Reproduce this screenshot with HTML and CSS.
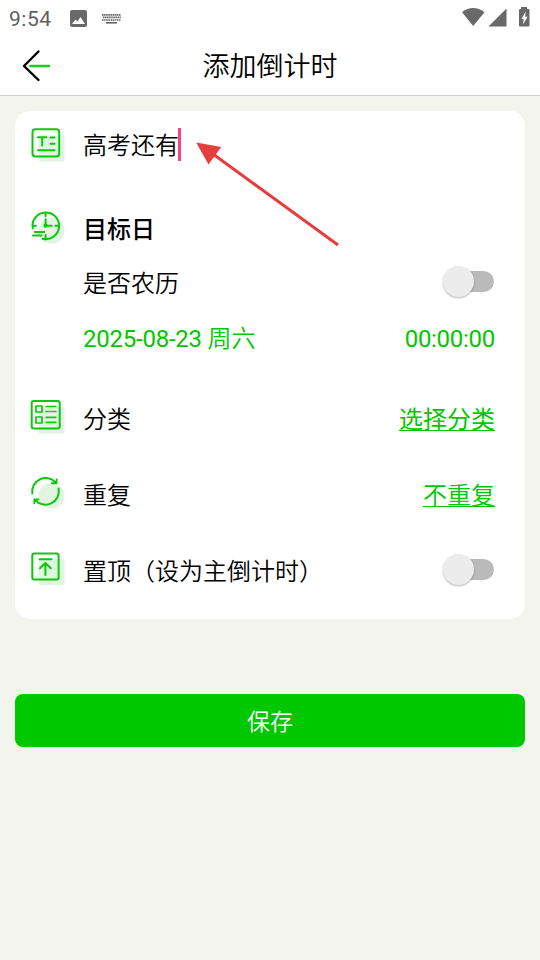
FILE: index.html
```html
<!DOCTYPE html>
<html lang="zh-CN">
<head>
<meta charset="UTF-8">
<title>添加倒计时</title>
<link rel="stylesheet" href="styles.css">
</head>
<body>
<div class="statusbar">
  <span class="clock">9:54</span>
  <svg class="st-photo" width="17" height="17" viewBox="0 0 17 17"><rect width="17" height="17" rx="2" fill="#696969"/><path d="M2 14l3.500-4.500 2 2L10.500 7l4.500 7z" fill="#fff"/></svg>
  <svg class="st-keys" width="19" height="10" viewBox="0 0 19 10" stroke="#666" fill="none"><path d="M0 .9h19" stroke-width="1.700" stroke-dasharray="1.600 .5"/><path d="M.8 3.400h18" stroke-width="1.600" stroke-dasharray="1.600 .5"/><path d="M0 6h19" stroke-width="1.700" stroke-dasharray="1.600 .5"/><path d="M4 8.800h11" stroke-width="1.600"/></svg>
  <svg class="st-right" width="68" height="22" viewBox="0 0 68 22" fill="#696969"><path d="M0 5.200Q11-3.200 22.500 5.200L11.200 19z"/><path d="M44.500 1.500V19.500H26.500z"/><path d="M59 0h6v2h1.500q1 0 1 1v15.500q0 1-1 1H58q-1 0-1-1V3q0-1 1-1h1z"/><path d="M63.700 4.500L59.500 12h2.200l-.7 5.500 4.600-7.800h-2.500z" fill="#fff"/></svg>
</div>
<header class="header">
  <svg class="back" width="30" height="34" viewBox="0 0 30 34" fill="none"><path d="M18.500 2.500L4 17 18.500 31" stroke="#000" stroke-width="2.400" stroke-linecap="round" stroke-linejoin="round"/><path d="M10.500 17H29" stroke="#16d016" stroke-width="2.700" stroke-linecap="round"/></svg>
  <h1>添加倒计时</h1>
</header>
<main>
  <section class="card">
    <div class="row row-title">
      <svg class="icon" viewBox="0 0 40 40"><rect class="tint" x="10.500" y="10.500" width="26" height="26" rx="2.500"/><rect x="4.500" y="4.200" width="26.700" height="27.300" rx="2.800"/><path d="M10 12.300h8.500M14.200 12.300v8.200M22.500 12.500h4M22.500 18.700h4M10 25.200h16.500"/></svg>
      <span class="text">高考还有</span><i class="caret"></i>
    </div>
    <div class="row row-target">
      <svg class="icon" viewBox="0 0 40 40"><circle class="tint" cx="23.500" cy="22.700" r="13"/><path d="M4.800 20.500A13.300 13.300 0 1 1 14.500 30.700M17.600 5v3.200M4.800 17.700h3.200M27.500 17.700H30.500M17.600 27v3.800M17.600 11.200v6.600h6M6.800 24h9.500M5 27.600h8.500"/><circle cx="17.600" cy="17.600" r="1.200" fill="#0ac80a"/></svg>
      <strong class="text">目标日</strong>
    </div>
    <div class="row row-lunar"><span class="text label">是否农历</span><span class="switch"></span></div>
    <div class="row row-date"><span class="text label date">2025-08-23 <span class="cjk">周六</span></span><span class="text time">00:00:00</span></div>
    <div class="row row-item">
      <svg class="icon" viewBox="0 0 40 40"><rect class="tint" x="10.500" y="9.500" width="26" height="26" rx="2"/><rect x="3.700" y="2.900" width="28" height="27.600" rx="2"/><g class="detail"><rect x="8" y="8" width="6" height="6"/><rect x="8" y="19" width="6" height="6"/><path d="M18.200 8.500h9.500M18.200 13.500h9.500M18.200 19.300h9.500M18.200 24.300h9.500"/></g></svg>
      <span class="text">分类</span><a class="text link crisp">选择分类</a>
    </div>
    <div class="row row-item">
      <svg class="icon" viewBox="0 0 40 40"><circle class="tint" cx="23.500" cy="21.700" r="13"/><path d="M4.300 19.500A13.400 13.400 0 0 1 27.500 8.500M30.600 14.500A13.500 13.500 0 0 1 7 25.800M24 9.300L28.300 9.300 28.700 5.500M6.400 29.300V25.400h4"/></svg>
      <span class="text">重复</span><a class="text link">不重复</a>
    </div>
    <div class="row row-item">
      <svg class="icon" viewBox="0 0 40 40"><rect class="tint" x="10.500" y="9" width="26" height="26" rx="2"/><rect x="4.300" y="3.400" width="26.300" height="26" rx="2"/><path d="M11.500 9.200h12M17.400 13.500v11.500M12 18.200l5.400-5.200 5.400 5.200"/></svg>
      <span class="text">置顶（设为主倒计时）</span><span class="switch"></span>
    </div>
    <svg class="pointer" width="146" height="108" viewBox="0 0 146 108"><path d="M18 14.800L142 105" stroke="#e53e3e" stroke-width="3"/><path d="M.2 2.500L25.200 6.900 12.500 24.500z" fill="#e53e3e"/></svg>
  </section>
  <button class="save">保存</button>
</main>
</body>
</html>
```

FILE: styles.css
```css
* { box-sizing: border-box; }
body {
  margin: 0;
  height: 960px;
  overflow: hidden;
  background: #f3f4ee;
  color: #000;
  font-family: Roboto, "Noto Sans CJK SC", sans-serif;
  font-size: 24px;
  font-weight: 350;
}
.statusbar {
  height: 36px;
  background: #fff;
  display: flex;
  align-items: center;
  padding: 0 10px 0 9px;
}
.clock { font-size: 21px; line-height: 36px; color: #606060; width: 61px; padding-top: 1px; letter-spacing: .5px; font-weight: 400; }
.st-keys { margin-left: 15px; margin-top: 1px; }
.st-right { margin-left: auto; }
.header {
  height: 60px;
  background: #fff;
  border-bottom: 1px solid #cfcfcf;
  display: grid;
  grid-template-columns: 60px 1fr 60px;
  align-items: center;
}
.back { margin-left: 20px; }
h1 { margin: 0; padding-top: 2px; font-size: 27px; line-height: 58px; font-weight: 350; text-align: center; }
main { padding: 15px 15px 0; }
.card {
  position: relative;
  height: 508px;
  border-radius: 15px;
  background: #fff;
  padding: 0 30px 0 13px;
}
.row { display: flex; align-items: center; line-height: 36px; }
.row-title { height: 68px; }
.row-target { height: 54px; margin-top: 22px; }
.row-lunar { height: 54px; }
.row-date { height: 58px; margin-bottom: 13px; color: #00c800; font-weight: 400; }
.row-item { height: 76px; }
.text { padding-top: 4px; }
.row-date .text, .row-title .text { padding-top: 2px; }
.label { margin-left: 55px; }
.date { letter-spacing: -.24px; }
.time { letter-spacing: -.28px; }
.cjk { font-weight: 350; letter-spacing: 0; }
.icon {
  width: 40px;
  height: 40px;
  margin-right: 15px;
  flex: none;
  fill: none;
  stroke: #0ac80a;
  stroke-width: 2;
  stroke-linecap: round;
  stroke-linejoin: round;
}
.icon .tint { fill: #e0f6e0; stroke: none; }
.icon .detail { stroke-width: 1.7; }
strong { font-weight: 500; }
.caret { width: 3px; height: 33px; background: #ff4081; margin-top: -1px; margin-left: -1px; }
.time, .link, .switch { margin-left: auto; }
.link { color: #00c800; text-decoration: underline; text-decoration-thickness: 1px; text-underline-offset: 2px; }
.crisp { font-weight: 400; }
.switch {
  position: relative;
  width: 42px;
  height: 21px;
  margin-right: 1px;
  margin-bottom: 1px;
  border-radius: 11px;
  background: #bababa;
}
.switch::before {
  content: "";
  position: absolute;
  left: -9px;
  top: -5px;
  width: 31px;
  height: 31px;
  border-radius: 50%;
  background: #ececec;
  box-shadow: 0 1px 2px rgba(0, 0, 0, .3);
}
.pointer { position: absolute; left: 181px; top: 29px; }
.save {
  display: block;
  width: 100%;
  height: 53px;
  margin-top: 75px;
  padding: 0 0 2px;
  border: 0;
  border-radius: 8px;
  background: #00c800;
  color: #fff;
  font: inherit;
  font-size: 23px;
}
```
